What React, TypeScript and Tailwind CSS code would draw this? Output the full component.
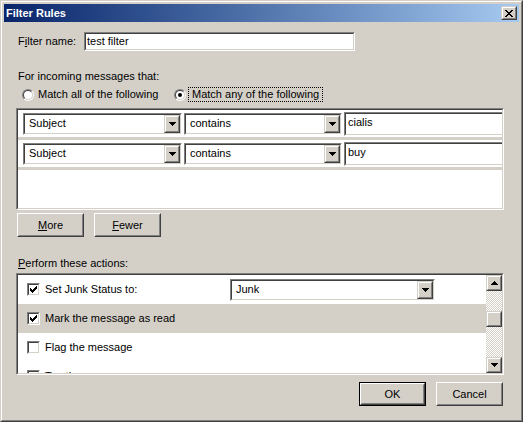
import React from 'react';

type Px = [number, number, number];

const ARROW_DOWN: Px[] = [[0, 0, 7], [1, 1, 5], [2, 2, 3], [3, 3, 1]];
const ARROW_UP: Px[] = [[3, 0, 1], [2, 1, 3], [1, 2, 5], [0, 3, 7]];
const CHECK: Px[] = [
  [6, 0, 1], [5, 1, 2], [0, 2, 1], [4, 2, 3], [0, 3, 2], [3, 3, 3], [0, 4, 5], [1, 5, 3], [2, 6, 1],
];
const CROSS: Px[] = [
  [0, 0, 2], [6, 0, 2], [1, 1, 2], [5, 1, 2], [2, 2, 4], [3, 3, 2], [2, 4, 4], [1, 5, 2], [5, 5, 2], [0, 6, 2], [6, 6, 2],
];

function Pixels({ rows, w, h }: { rows: Px[]; w: number; h: number }) {
  return (
    <svg width={w} height={h} viewBox={`0 0 ${w} ${h}`} shapeRendering="crispEdges">
      {rows.map(([x, y, width], i) => (
        <rect key={i} x={x} y={y} width={width} height="1" fill="#000" />
      ))}
    </svg>
  );
}

function Raised({ className = '', children }: { className?: string; children?: React.ReactNode }) {
  return (
    <div className={`shrink-0 border border-t-[#d4d0c8] border-l-[#d4d0c8] border-r-[#404040] border-b-[#404040] bg-[#d4d0c8] ${className}`}>
      <div className="flex h-full w-full items-center justify-center border border-t-white border-l-white border-r-[#808080] border-b-[#808080]">
        {children}
      </div>
    </div>
  );
}

function Sunken({
  className = '',
  innerClassName = '',
  children,
}: {
  className?: string;
  innerClassName?: string;
  children?: React.ReactNode;
}) {
  return (
    <div className={`border border-t-[#808080] border-l-[#808080] border-r-white border-b-white ${className}`}>
      <div className={`h-full w-full border border-t-[#404040] border-l-[#404040] border-r-[#d4d0c8] border-b-[#d4d0c8] bg-white ${innerClassName}`}>
        {children}
      </div>
    </div>
  );
}

function PushButton({ children, isDefault = false }: { children: React.ReactNode; isDefault?: boolean }) {
  const face = (
    <div className="h-full w-full border border-t-white border-l-white border-r-[#404040] border-b-[#404040]">
      <div className="flex h-full w-full items-center justify-center border border-t-[#d4d0c8] border-l-[#d4d0c8] border-r-[#808080] border-b-[#808080]">
        {children}
      </div>
    </div>
  );
  return (
    <div className={`h-[24px] w-[67px] shrink-0 bg-[#d4d0c8] ${isDefault ? 'border border-black' : ''}`}>{face}</div>
  );
}

function Combo({ value, width }: { value: string; width: string }) {
  return (
    <Sunken className={`${width} h-[22px] shrink-0`} innerClassName="flex items-center">
      <span className="flex-1 truncate pl-[4px]">{value}</span>
      <Raised className="h-full w-[16px]">
        <Pixels rows={ARROW_DOWN} w={7} h={4} />
      </Raised>
    </Sunken>
  );
}

function CheckBox({ checked = false }: { checked?: boolean }) {
  return (
    <Sunken className="h-[13px] w-[13px] shrink-0" innerClassName="flex items-center justify-center">
      {checked && <Pixels rows={CHECK} w={7} h={7} />}
    </Sunken>
  );
}

function Radio({ checked = false }: { checked?: boolean }) {
  return (
    <div className="h-[12px] w-[12px] shrink-0 rounded-full border border-t-[#808080] border-l-[#808080] border-r-white border-b-white">
      <div className="flex h-full w-full items-center justify-center rounded-full border border-t-[#404040] border-l-[#404040] border-r-[#d4d0c8] border-b-[#d4d0c8] bg-white">
        {checked && <div className="h-[4px] w-[4px] rounded-full bg-black" />}
      </div>
    </div>
  );
}

function CriteriaRow({ value }: { value: string }) {
  return (
    <div className="flex h-[30px] shrink-0 items-center gap-[2px] border-b-[3px] border-b-[#d4d0c8] bg-white pl-[5px]">
      <Combo value="Subject" width="w-[159px]" />
      <Combo value="contains" width="w-[158px]" />
      <Sunken className="h-[24px] w-[180px] shrink-0" innerClassName="pl-[2px] pt-[2px]">
        {value}
      </Sunken>
    </div>
  );
}

function ActionRow({ label, checked, grey, children }: { label: string; checked?: boolean; grey?: boolean; children?: React.ReactNode }) {
  return (
    <div className={`flex h-[29px] shrink-0 items-center pl-[9px] ${grey ? 'bg-[#d4d0c8]' : 'bg-white'}`}>
      <CheckBox checked={checked} />
      <span className="ml-[5px] w-[185px] shrink-0">{label}</span>
      {children}
    </div>
  );
}

export default function App() {
  return (
    <div className="h-[422px] w-[523px] border border-t-[#d4d0c8] border-l-[#d4d0c8] border-r-[#404040] border-b-[#404040] bg-[#d4d0c8] font-['Liberation_Sans',Arial,sans-serif] text-[11px] leading-[13px] text-black">
      <div className="flex h-full flex-col border border-t-white border-l-white border-r-[#808080] border-b-[#808080] p-[2px]">
        {/* title bar */}
        <div className="flex h-[18px] shrink-0 items-center justify-between bg-linear-to-r from-[#0a246a] to-[#a6caf0] pl-[2px] pr-[2px]">
          <span className="font-bold text-white">Filter Rules</span>
          <Raised className="h-[14px] w-[16px]">
            <Pixels rows={CROSS} w={8} h={7} />
          </Raised>
        </div>

        <div className="flex flex-col pl-[12px] pr-[15px]">
          {/* filter name */}
          <div className="mt-[10px] flex h-[19px] items-center">
            <span className="ml-[2px] w-[66px] shrink-0">
              F<span className="underline">i</span>lter name:
            </span>
            <Sunken className="h-[19px] w-[271px]" innerClassName="flex items-center pl-[1px]">
              test filter
            </Sunken>
          </div>

          <div className="ml-[2px] mt-[19px] h-[13px]">For incoming messages that:</div>

          <div className="mt-[4px] flex h-[15px] items-center">
            <div className="ml-[6px] flex w-[152px] shrink-0 items-center gap-[4px]">
              <Radio />
              <span>Match all of the following</span>
            </div>
            <Radio checked />
            <span className="ml-[2px] flex h-[15px] items-center border border-dotted border-black px-[3px]">
              Match any of the following
            </span>
          </div>

          {/* criteria list */}
          <Sunken className="mt-[6px] h-[102px]" innerClassName="flex flex-col overflow-hidden">
            <CriteriaRow value="cialis" />
            <CriteriaRow value="buy" />
          </Sunken>

          <div className="mt-[3px] flex gap-[10px] pl-[1px]">
            <PushButton>
              <span className="underline">M</span>ore
            </PushButton>
            <PushButton>
              <span className="underline">F</span>ewer
            </PushButton>
          </div>

          <div className="ml-[2px] mt-[20px] h-[13px]">
            <span className="underline">P</span>erform these actions:
          </div>

          {/* actions list */}
          <Sunken className="mt-[3px] h-[102px]" innerClassName="flex overflow-hidden">
            <div className="flex flex-1 flex-col overflow-hidden">
              <ActionRow label="Set Junk Status to:" checked>
                <Combo value="Junk" width="w-[205px]" />
              </ActionRow>
              <ActionRow label="Mark the message as read" checked grey />
              <ActionRow label="Flag the message" />
              <ActionRow label="Tag the message" />
            </div>
            <div className="flex w-[16px] shrink-0 flex-col">
              <Raised className="h-[16px] w-[16px]">
                <Pixels rows={ARROW_UP} w={7} h={4} />
              </Raised>
              <div className="h-[20px] bg-[repeating-conic-gradient(#ffffff_0_25%,#d4d0c8_0_50%)] bg-[length:2px_2px]" />
              <Raised className="h-[16px] w-[16px]" />
              <div className="flex-1 bg-[repeating-conic-gradient(#ffffff_0_25%,#d4d0c8_0_50%)] bg-[length:2px_2px]" />
              <Raised className="h-[16px] w-[16px]">
                <Pixels rows={ARROW_DOWN} w={7} h={4} />
              </Raised>
            </div>
          </Sunken>

          <div className="mr-[1px] mt-[7px] flex justify-end gap-[10px]">
            <PushButton isDefault>OK</PushButton>
            <PushButton>Cancel</PushButton>
          </div>
        </div>
      </div>
    </div>
  );
}
